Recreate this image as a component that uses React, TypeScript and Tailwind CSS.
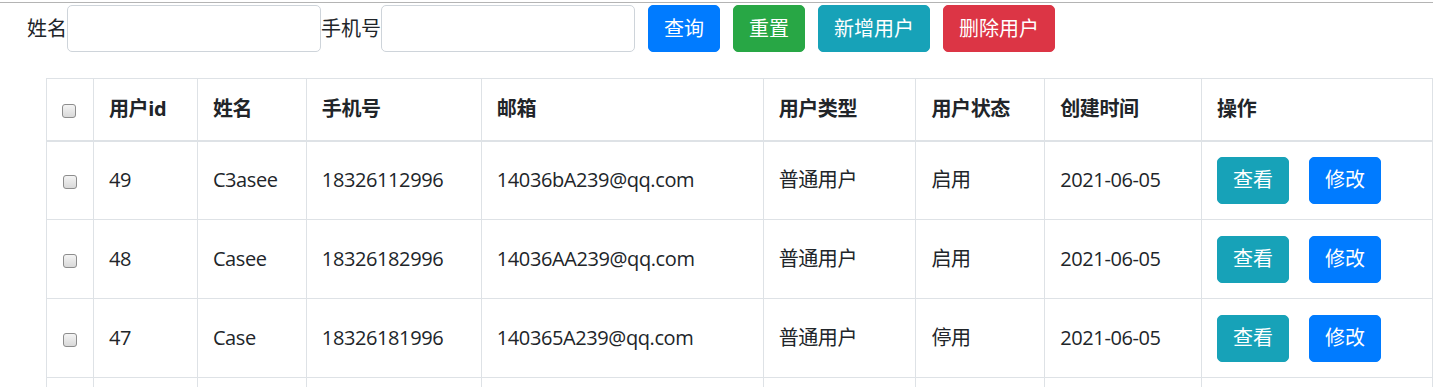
const font = { fontFamily: '"Open Sans", "Noto Sans CJK SC", sans-serif' };

type User = {
  id: number;
  name: string;
  phone: string;
  email: string;
  type: string;
  status: string;
  created: string;
};

const users: User[] = [
  { id: 49, name: "C3asee", phone: "18326112996", email: "14036bA239@qq.com", type: "普通用户", status: "启用", created: "2021-06-05" },
  { id: 48, name: "Casee", phone: "18326182996", email: "14036AA239@qq.com", type: "普通用户", status: "启用", created: "2021-06-05" },
  { id: 47, name: "Case", phone: "18326181996", email: "140365A239@qq.com", type: "普通用户", status: "停用", created: "2021-06-05" },
];

const columns = [
  { label: "", width: 47 },
  { label: "用户id", width: 104 },
  { label: "姓名", width: 109 },
  { label: "手机号", width: 175 },
  { label: "邮箱", width: 282 },
  { label: "用户类型", width: 153 },
  { label: "用户状态", width: 129 },
  { label: "创建时间", width: 157 },
  { label: "操作", width: 231 },
];

function Checkbox() {
  return (
    <span className="inline-block h-[14px] w-[14px] rounded-[3px] border border-[#8d8d8d] bg-gradient-to-b from-[#f4f4f4] to-[#d9d9d9] align-middle" />
  );
}

function Button({ color, children }: { color: string; children: React.ReactNode }) {
  return (
    <button
      className={`h-[47px] rounded-[5px] border px-[15px] text-[20px] leading-[30px] text-white ${color}`}
    >
      {children}
    </button>
  );
}

function Input() {
  return (
    <input
      type="text"
      className="h-[47px] w-[254px] rounded-[5px] border border-[#ced4da] bg-white px-3 outline-none"
    />
  );
}

const cell = "border border-[#dee2e6] px-[15px] align-middle";

export default function App() {
  return (
    <div className="min-h-screen bg-white pt-[2px] text-[#212529]" style={font}>
      <div className="h-px bg-[#b4b4b4]" />
      <div className="mt-[2px] flex h-[47px] items-center pl-[27px] text-[20px]">
        <span>姓名</span>
        <Input />
        <span>手机号</span>
        <Input />
        <div className="ml-[13px] flex gap-[13px]">
          <Button color="border-[#007bff] bg-[#007bff]">查询</Button>
          <Button color="border-[#28a745] bg-[#28a745]">重置</Button>
          <Button color="border-[#17a2b8] bg-[#17a2b8]">新增用户</Button>
          <Button color="border-[#dc3545] bg-[#dc3545]">删除用户</Button>
        </div>
      </div>

      <table className="ml-[46px] mt-[26px] table-fixed border-collapse text-[20px] tracking-[-0.4px]">
        <colgroup>
          {columns.map((c, i) => (
            <col key={i} style={{ width: c.width }} />
          ))}
        </colgroup>
        <thead>
          <tr className="h-[62px]">
            {columns.map((c, i) => (
              <th
                key={i}
                className={`border border-b-2 border-[#dee2e6] px-[15px] text-left align-middle font-bold leading-[30px] ${
                  i === 0 ? "text-center" : ""
                }`}
              >
                {i === 0 ? <Checkbox /> : c.label}
              </th>
            ))}
          </tr>
        </thead>
        <tbody>
          {users.map((u) => (
            <tr key={u.id} className="h-[79px]">
              <td className="border border-[#dee2e6] text-center align-middle">
                <Checkbox />
              </td>
              <td className={cell}>{u.id}</td>
              <td className={cell}>{u.name}</td>
              <td className={cell}>{u.phone}</td>
              <td className={cell}>{u.email}</td>
              <td className={cell}>{u.type}</td>
              <td className={cell}>{u.status}</td>
              <td className={cell}>{u.created}</td>
              <td className={`${cell} tracking-normal`}>
                <div className="flex gap-[20px]">
                  <Button color="border-[#17a2b8] bg-[#17a2b8]">查看</Button>
                  <Button color="border-[#007bff] bg-[#007bff]">修改</Button>
                </div>
              </td>
            </tr>
          ))}
          <tr className="h-[79px]">
            {columns.map((_, i) => (
              <td key={i} className={cell} />
            ))}
          </tr>
        </tbody>
      </table>
    </div>
  );
}
